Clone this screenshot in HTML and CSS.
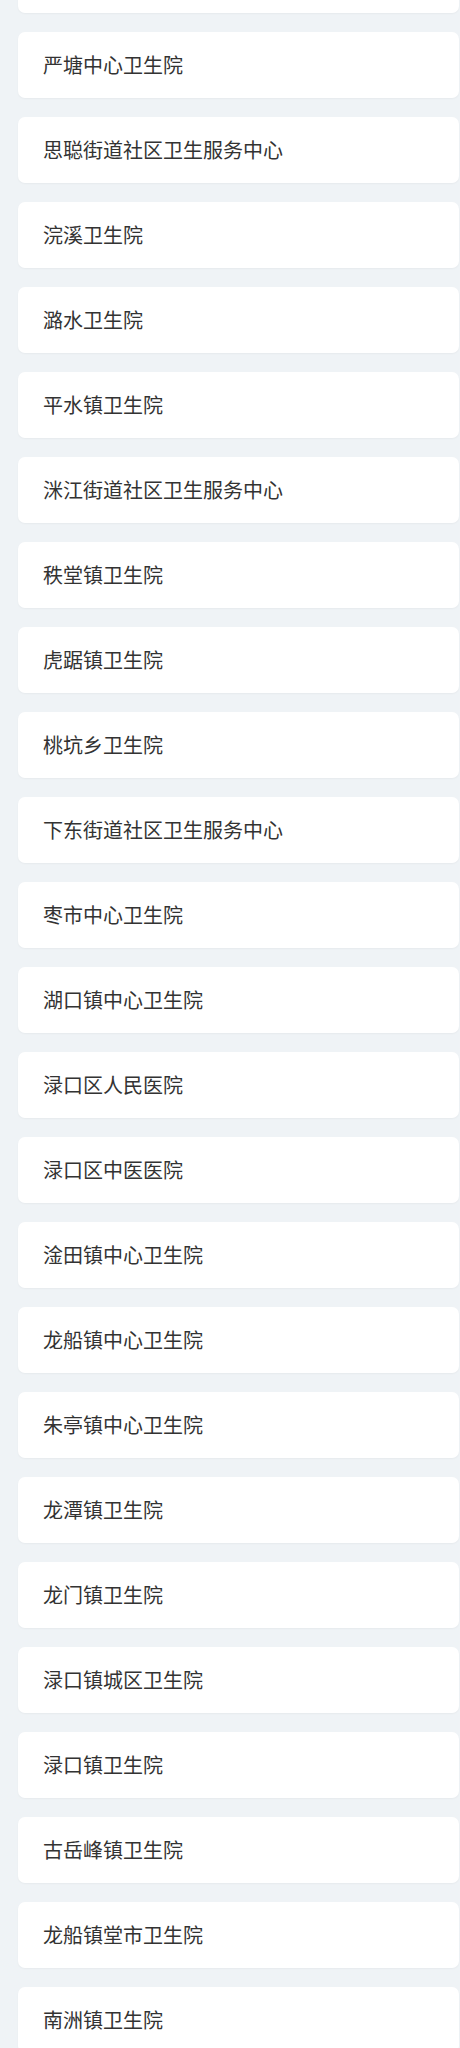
FILE: index.html
```html
<!DOCTYPE html>
<html lang="zh-CN">
<head>
<meta charset="utf-8">
<title>医院列表</title>
<link rel="stylesheet" href="styles.css">
</head>
<body>
<ul class="list">
  <li class="card" aria-hidden="true"></li>
  <li class="card">严塘中心卫生院</li>
  <li class="card">思聪街道社区卫生服务中心</li>
  <li class="card">浣溪卫生院</li>
  <li class="card">潞水卫生院</li>
  <li class="card">平水镇卫生院</li>
  <li class="card">洣江街道社区卫生服务中心</li>
  <li class="card">秩堂镇卫生院</li>
  <li class="card">虎踞镇卫生院</li>
  <li class="card">桃坑乡卫生院</li>
  <li class="card">下东街道社区卫生服务中心</li>
  <li class="card">枣市中心卫生院</li>
  <li class="card">湖口镇中心卫生院</li>
  <li class="card">渌口区人民医院</li>
  <li class="card">渌口区中医医院</li>
  <li class="card">淦田镇中心卫生院</li>
  <li class="card">龙船镇中心卫生院</li>
  <li class="card">朱亭镇中心卫生院</li>
  <li class="card">龙潭镇卫生院</li>
  <li class="card">龙门镇卫生院</li>
  <li class="card">渌口镇城区卫生院</li>
  <li class="card">渌口镇卫生院</li>
  <li class="card">古岳峰镇卫生院</li>
  <li class="card">龙船镇堂市卫生院</li>
  <li class="card">南洲镇卫生院</li>
</ul>
</body>
</html>
```

FILE: styles.css
```css
html, body {
  margin: 0;
  padding: 0;
  background: #eff3f6;
}
body {
  font-family: "Noto Sans CJK SC", "Noto Sans", sans-serif;
  color: #333333;
}
.list {
  list-style: none;
  margin: -53px 0 0 0;
  padding: 0 1px 0 18px;
  display: flex;
  flex-direction: column;
  gap: 19px;
}
.card {
  height: 66px;
  box-sizing: border-box;
  display: flex;
  align-items: center;
  padding: 0 25px;
  background: #ffffff;
  border-radius: 7px;
  box-shadow: 0 1px 2px rgba(0, 0, 0, 0.04);
  font-size: 20px;
  line-height: 1;
}
```
